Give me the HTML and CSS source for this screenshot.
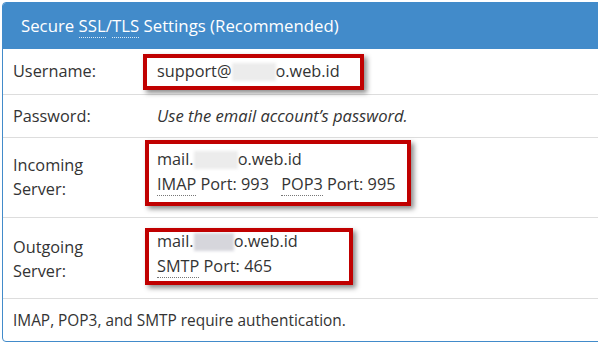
FILE: index.html
```html
<!DOCTYPE html>
<html>
<head>
<meta charset="utf-8">
<link rel="stylesheet" href="styles.css">
</head>
<body>
<div class="panel">
  <div class="panel-heading">Secure <abbr title="Secure Sockets Layer">SSL</abbr>/<abbr title="Transport Layer Security">TLS</abbr> Settings (Recommended)</div>
  <div class="row row-user">
    <div class="label">Username:</div>
    <div class="value"><span class="mark mark-user">support@<span class="blur"></span>o.web.id</span></div>
  </div>
  <div class="row row-pass">
    <div class="label">Password:</div>
    <div class="value"><em>Use the email account’s password.</em></div>
  </div>
  <div class="row row-in">
    <div class="label">Incoming<br>Server:</div>
    <div class="value top"><span class="mark mark-in">mail.<span class="blur"></span>o.web.id<br><abbr>IMAP</abbr> Port: 993 <span class="gap"></span><abbr>POP3</abbr> Port: 995</span></div>
  </div>
  <div class="row row-out">
    <div class="label">Outgoing<br>Server:</div>
    <div class="value top"><span class="mark mark-out">mail.<span class="blur blur-dark"></span>o.web.id<br><abbr>SMTP</abbr> Port: 465</span></div>
  </div>
  <div class="row row-foot">
    <div class="full">IMAP, POP3, and SMTP require authentication.</div>
  </div>
</div>
</body>
</html>
```

FILE: styles.css
```css
html, body {
  margin: 0;
  padding: 0;
  background: #fff;
  overflow: hidden;
}
body {
  font-family: "Open Sans", "Liberation Sans", sans-serif;
  font-size: 16.3px;
  line-height: 24px;
  color: #333;
}
.panel {
  margin: 2px 0 0 2px;
  width: 640px;
  height: 340px;
  border: 1px solid #428bca;
  border-radius: 4px;
  box-sizing: border-box;
  overflow: hidden;
}
.panel-heading {
  background: #428bca;
  color: #fff;
  font-size: 16.8px;
  padding: 11px 18px 12px;
  line-height: 23px;
}
.panel-heading abbr {
  text-decoration: none;
  border-bottom: 1px dotted rgba(255,255,255,0.8);
}
abbr {
  text-decoration: none;
  border-bottom: 1px dotted #777;
  cursor: help;
}
.row {
  display: grid;
  grid-template-columns: 144px 1fr;
  align-items: center;
  border-top: 1px solid #ddd;
}
.row-user { border-top: none; }
.label, .value, .full {
  padding: 0 10px;
}
.row-user .label, .row-user .value { padding-top: 10px; padding-bottom: 11px; }
.row-pass .label, .row-pass .value { padding-top: 9px; padding-bottom: 9px; }
.row-in .label { padding-top: 15px; padding-bottom: 16px; }
.row-out .label { padding-top: 17px; padding-bottom: 15px; }
.value.top { align-self: start; line-height: 25px; }
.row-in .value { padding-top: 9px; }
.row-out .value { padding-top: 11px; }
.row-foot { display: block; }
.full { padding-top: 10px; padding-bottom: 10px; font-size: 15.4px; }
.value em { font-style: italic; font-size: 16.6px; }
.mark {
  position: relative;
  display: inline-block;
}
.mark::after {
  content: "";
  position: absolute;
  border: 4px solid #c00000;
  box-shadow: 3px 3px 5px rgba(0,0,0,0.45);
  pointer-events: none;
}
.mark-user::after { left: -14px; top: -5px; width: 213px; height: 28px; }
.mark-in::after { left: -12px; top: -7px; width: 258px; height: 58px; }
.mark-out::after { left: -12px; top: -1px; width: 200px; height: 49px; }
.blur {
  display: inline-block;
  width: 44px;
  height: 18px;
  vertical-align: -4px;
  background: #ececec;
  filter: blur(1.5px);
}
.blur-dark { width: 40px; background: #d6d6dc; }
.gap { display: inline-block; width: 8px; }
```
